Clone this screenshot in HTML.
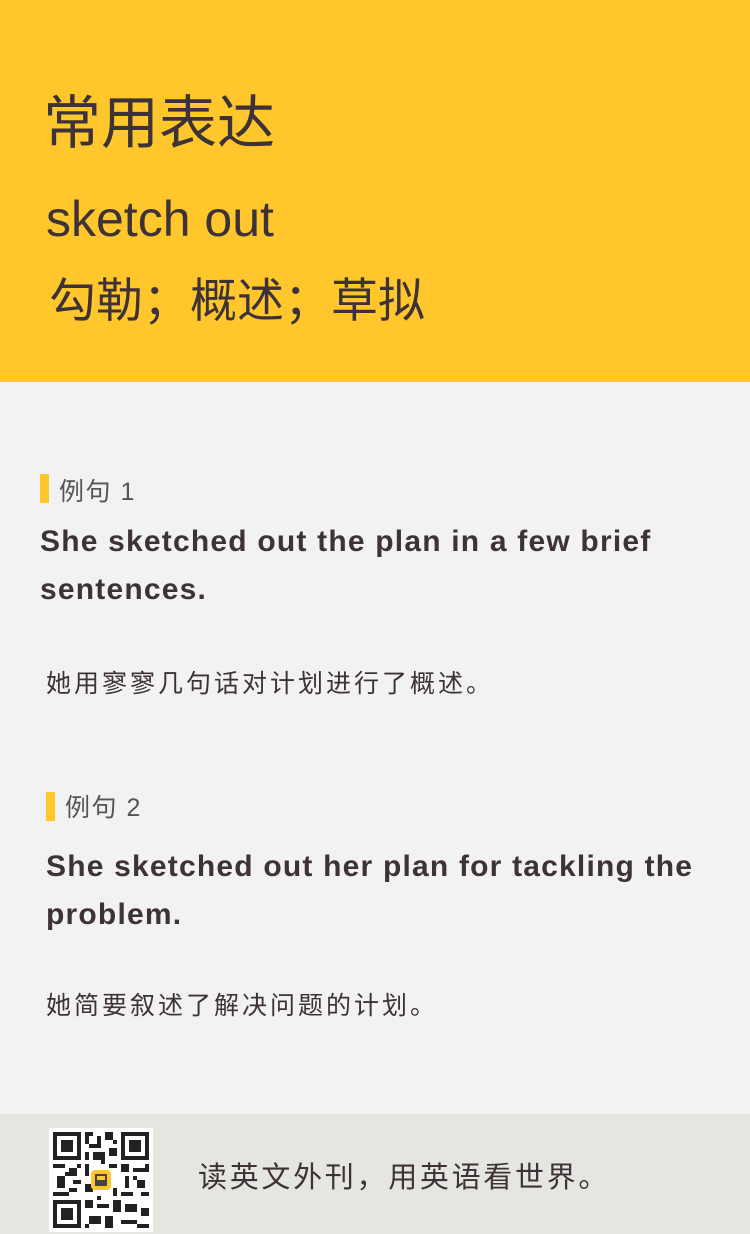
<!DOCTYPE html>
<html><head><meta charset="utf-8"><style>
*{margin:0;padding:0;box-sizing:border-box}
body{width:750px;height:1234px;background:#f2f2f2;font-family:"Liberation Sans","Noto Sans CJK SC",sans-serif;color:#3d3238;position:relative;overflow:hidden}
.top{position:absolute;left:0;top:0;width:750px;height:382px;background:#ffc72c}
.a{position:absolute;white-space:nowrap}
.bar{position:absolute;width:9px;height:29px;background:#ffc72c}
.lbl{font-size:25px;color:#555;letter-spacing:1.5px}
.en{font-size:30px;line-height:48px;font-weight:bold;letter-spacing:1.2px}
.cn{font-size:25px;letter-spacing:3px}
.foot{position:absolute;left:0;top:1114px;width:750px;height:120px;background:#e6e6e1}
</style></head><body>
<div class="top">
<div class="a" style="left:43px;top:76px;font-size:58px;font-family:'Noto Sans CJK SC',sans-serif">常用表达</div>
<div class="a" style="left:46px;top:190px;font-size:50px">sketch out</div>
<div class="a" style="left:49px;top:262px;font-size:47px;font-family:'Noto Sans CJK SC',sans-serif">勾勒；概述；草拟</div>
</div>
<div class="bar" style="left:40px;top:474px"></div>
<div class="a lbl" style="left:59px;top:472px">例句 1</div>
<div class="a en" style="left:40px;top:518px;white-space:normal;width:700px">She sketched out the plan in a few brief sentences.</div>
<div class="a cn" style="left:46px;top:664px">她用寥寥几句话对计划进行了概述。</div>
<div class="bar" style="left:46px;top:792px"></div>
<div class="a lbl" style="left:65px;top:788px">例句 2</div>
<div class="a en" style="left:46px;top:843px;white-space:normal;width:700px">She sketched out her plan for tackling the problem.</div>
<div class="a cn" style="left:46px;top:986px">她简要叙述了解决问题的计划。</div>
<div class="foot">
<svg style="position:absolute;left:49px;top:14px" width="104" height="104" viewBox="0 0 26 26">
<rect width="26" height="26" fill="#fff"/>
<g fill="#222">
<path d="M1 1h7v7h-7zM2 2v5h5v-5zM3 3h3v3h-3z" fill-rule="evenodd"/>
<path d="M18 1h7v7h-7zM19 2v5h5v-5zM20 3h3v3h-3z" fill-rule="evenodd"/>
<path d="M1 18h7v7h-7zM2 19v5h5v-5zM3 20h3v3h-3z" fill-rule="evenodd"/>
<rect x="9" y="1" width="2" height="1"/><rect x="12" y="2" width="1" height="2"/><rect x="14" y="1" width="2" height="2"/><rect x="10" y="4" width="3" height="1"/><rect x="9" y="6" width="1" height="2"/><rect x="11" y="6" width="3" height="2"/><rect x="15" y="5" width="2" height="2"/><rect x="9" y="2" width="1" height="2"/><rect x="16" y="3" width="1" height="1"/>
<rect x="1" y="9" width="3" height="1"/><rect x="5" y="10" width="2" height="2"/><rect x="2" y="12" width="2" height="3"/><rect x="6" y="13" width="2" height="1"/><rect x="1" y="16" width="4" height="1"/><rect x="5" y="15" width="2" height="1"/><rect x="4" y="11" width="1" height="1"/><rect x="7" y="9" width="1" height="1"/>
<rect x="18" y="9" width="2" height="2"/><rect x="21" y="10" width="3" height="1"/><rect x="19" y="12" width="1" height="3"/><rect x="22" y="13" width="2" height="2"/><rect x="18" y="16" width="3" height="1"/><rect x="23" y="16" width="2" height="1"/><rect x="24" y="9" width="1" height="2"/><rect x="21" y="12" width="1" height="1"/>
<rect x="9" y="18" width="2" height="2"/><rect x="12" y="19" width="3" height="1"/><rect x="16" y="18" width="2" height="3"/><rect x="19" y="19" width="3" height="2"/><rect x="23" y="20" width="2" height="2"/><rect x="10" y="22" width="3" height="2"/><rect x="14" y="22" width="2" height="3"/><rect x="18" y="23" width="4" height="1"/><rect x="22" y="24" width="3" height="1"/><rect x="9" y="24" width="1" height="1"/><rect x="12" y="17" width="1" height="1"/>
<rect x="9" y="9" width="1" height="3"/><rect x="15" y="9" width="2" height="1"/><rect x="9" y="14" width="2" height="2"/><rect x="16" y="15" width="1" height="2"/><rect x="13" y="8" width="1" height="1"/>
</g>
<rect x="10.5" y="10.5" width="5" height="5" rx="1" fill="#ffc72c"/>
<rect x="11.5" y="11.5" width="3" height="3" fill="#444"/>
<rect x="12" y="12" width="2" height="1" fill="#ffc72c"/>
</svg>
<div class="a" style="left:198px;top:40px;font-size:29px;letter-spacing:2.7px">读英文外刊，用英语看世界。</div>
</div>
</body></html>
